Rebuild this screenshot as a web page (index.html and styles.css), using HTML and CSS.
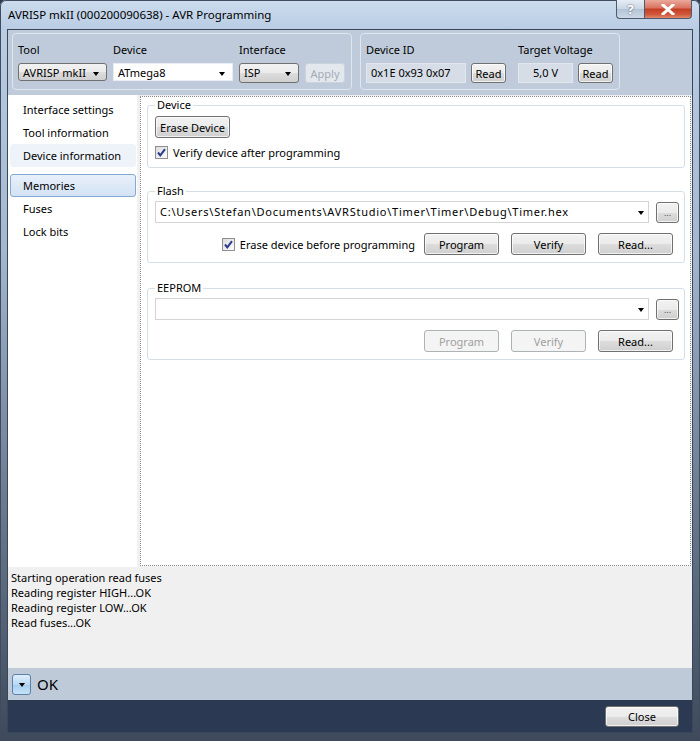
FILE: index.html
```html
<!DOCTYPE html>
<html lang="en">
<head>
    <meta charset="UTF-8">
    <title>AVR Programming</title>
    <link rel="stylesheet" href="styles.css">
</head>
<body>

<div class="window">
    <!-- Title bar -->
    <div class="titlebar">
        <span class="title">AVRISP mkII (000200090638) - AVR Programming</span>
        <div class="caption-buttons">
            <span class="cap-btn help-btn">?</span>
            <span class="cap-btn close-btn">
                <svg width="14" height="11" viewBox="0 0 14 11"><path d="M2 1 L12 10 M12 1 L2 10" stroke="#fff" stroke-width="3" stroke-linecap="square"/></svg>
            </span>
        </div>
    </div>

    <div class="client">
        <!-- Tool / device selection -->
        <div class="toolbar">
            <div class="tgroup">
                <div class="tfield">
                    <span class="tlabel">Tool</span>
                    <div class="combo btn-combo tool-combo">AVRISP mkII<span class="caret"></span></div>
                </div>
                <div class="tfield">
                    <span class="tlabel">Device</span>
                    <div class="combo white-combo device-combo">ATmega8<span class="caret"></span></div>
                </div>
                <div class="tfield">
                    <span class="tlabel">Interface</span>
                    <div class="tfield-row">
                        <div class="combo btn-combo iface-combo">ISP<span class="caret"></span></div>
                        <button class="btn apply-btn" disabled>Apply</button>
                    </div>
                </div>
            </div>

            <div class="tgroup">
                <div class="tfield">
                    <span class="tlabel">Device ID</span>
                    <div class="tfield-row">
                        <div class="readout id-readout">0x1E 0x93 0x07</div>
                        <button class="btn small-btn">Read</button>
                    </div>
                </div>
                <div class="tfield voltage-field">
                    <span class="tlabel">Target Voltage</span>
                    <div class="tfield-row">
                        <div class="readout volt-readout">5,0 V</div>
                        <button class="btn small-btn">Read</button>
                    </div>
                </div>
            </div>
        </div>

        <div class="main-area">
            <!-- Page list -->
            <ul class="sidebar">
                <li>Interface settings</li>
                <li>Tool information</li>
                <li class="hover">Device information</li>
                <li class="selected gap">Memories</li>
                <li>Fuses</li>
                <li>Lock bits</li>
            </ul>

            <div class="page">
                <fieldset class="group">
                    <legend>Device</legend>
                    <button class="btn erase-btn">Erase Device</button>
                    <label class="check-row">
                        <span class="checkbox"><svg width="13" height="13" viewBox="0 0 13 13"><path d="M3 6.5 L5.3 9.3 L10 3.2" stroke="#2a3a8c" stroke-width="2" fill="none"/></svg></span>
                        Verify device after programming
                    </label>
                </fieldset>

                <fieldset class="group">
                    <legend>Flash</legend>
                    <div class="file-row">
                        <div class="combo file-combo"><span class="path">C:\Users\Stefan\Documents\AVRStudio\Timer\Timer\Debug\Timer.hex</span><span class="caret"></span></div>
                        <button class="btn browse-btn">...</button>
                    </div>
                    <div class="action-row">
                        <label class="check-row">
                            <span class="checkbox"><svg width="13" height="13" viewBox="0 0 13 13"><path d="M3 6.5 L5.3 9.3 L10 3.2" stroke="#2a3a8c" stroke-width="2" fill="none"/></svg></span>
                            Erase device before programming
                        </label>
                        <button class="btn action-btn">Program</button>
                        <button class="btn action-btn">Verify</button>
                        <button class="btn action-btn">Read...</button>
                    </div>
                </fieldset>

                <fieldset class="group">
                    <legend>EEPROM</legend>
                    <div class="file-row">
                        <div class="combo file-combo"><span class="caret"></span></div>
                        <button class="btn browse-btn">...</button>
                    </div>
                    <div class="action-row">
                        <button class="btn action-btn" disabled>Program</button>
                        <button class="btn action-btn" disabled>Verify</button>
                        <button class="btn action-btn">Read...</button>
                    </div>
                </fieldset>
            </div>
        </div>

        <!-- Output log -->
        <div class="log">
            <div>Starting operation read fuses</div>
            <div>Reading register HIGH...OK</div>
            <div>Reading register LOW...OK</div>
            <div>Read fuses...OK</div>
        </div>

        <div class="status">
            <span class="expand-btn"><span class="caret"></span></span>
            <span class="status-text">OK</span>
        </div>

        <div class="footer">
            <button class="btn close-dlg">Close</button>
        </div>
    </div>
</div>

</body>
</html>
```

FILE: styles.css
```css
body {
    margin: 0;
    font-family: "Noto Sans", sans-serif;
    font-size: 11px;
    color: #000;
    background: #2b3953;
}

.window {
    width: 700px;
    height: 741px;
    box-sizing: border-box;
    display: flex;
    flex-direction: column;
    padding: 0 8px 9px 8px;
    background: linear-gradient(to bottom, #cddcee 0px, #b8cce3 30px, #a3b7cf 250px, #6b7a8f 500px, #3e4a5b 741px);
    box-shadow: inset 0 0 0 1px #3f4c5f;
    border-radius: 6px 6px 0 0;
}

/* Title bar */
.titlebar {
    height: 30px;
    display: flex;
    align-items: flex-start;
    flex-shrink: 0;
}

.title {
    line-height: 30px;
    font-size: 11.5px;
    color: #000;
}

.caption-buttons {
    margin-left: auto;
    display: flex;
}

.cap-btn {
    height: 18px;
    display: flex;
    align-items: center;
    justify-content: center;
    border: 1px solid #4d5b70;
    border-top: none;
}

.help-btn {
    width: 27px;
    border-right: none;
    border-radius: 0 0 0 4px;
    background: linear-gradient(to bottom, #e6edf5, #c9d6e4 50%, #b3c3d6 51%, #cbd8e6);
    color: #fff;
    font-weight: bold;
    font-size: 13px;
    text-shadow: 0 0 2px #445;
}

.close-btn {
    width: 46px;
    border-radius: 0 0 4px 0;
    background: linear-gradient(to bottom, #e9a99c, #d9715d 45%, #c33d22 50%, #d0583b 80%, #e2896d);
}

/* Client */
.client {
    flex: 1;
    display: flex;
    flex-direction: column;
    box-shadow: 0 0 0 1px #3a475a;
    background: #f0f0f0;
}

.toolbar {
    height: 65px;
    flex-shrink: 0;
    box-sizing: border-box;
    background: #bfcbda;
    padding: 3px 4px 0 4px;
    display: flex;
    gap: 8px;
    align-items: flex-start;
}

.tgroup {
    display: flex;
    gap: 6px;
    border: 1px solid #e0e6ee;
    border-radius: 4px;
    padding: 8px 6px 8px 5px;
    height: 39px;
}

.tfield {
    display: flex;
    flex-direction: column;
}

.voltage-field {
    margin-left: 6px;
}

.tlabel {
    line-height: 15px;
    margin-bottom: 6px;
}

.tfield-row {
    display: flex;
    gap: 6px;
}

.combo {
    position: relative;
    box-sizing: border-box;
    height: 20px;
    line-height: 18px;
    padding-left: 4px;
    white-space: nowrap;
    overflow: hidden;
}

.caret {
    position: absolute;
    right: 7px;
    top: 8px;
    border-left: 3.5px solid transparent;
    border-right: 3.5px solid transparent;
    border-top: 4px solid #000;
}

.btn-combo {
    border: 1px solid #707070;
    border-radius: 3px;
    background: linear-gradient(to bottom, #f2f2f2, #ebebeb 50%, #dddddd 51%, #cfcfcf);
}

.tool-combo {
    width: 89px;
}

.white-combo {
    background: #fff;
    border: 1px solid #e8edf3;
}

.device-combo {
    width: 120px;
}

.iface-combo {
    width: 60px;
}

.btn {
    font-family: inherit;
    font-size: 11px;
    color: #000;
    border: 1px solid #707070;
    border-radius: 3px;
    background: linear-gradient(to bottom, #f2f2f2, #ebebeb 50%, #dddddd 51%, #cfcfcf);
    padding: 0;
    height: 22px;
    box-shadow: inset 0 0 0 1px rgba(255, 255, 255, 0.7);
}

.btn:disabled {
    color: #a0a0a0;
    border-color: #adb2b5;
    background: #f4f4f4;
    box-shadow: none;
}

.apply-btn {
    width: 40px;
    height: 20px;
}

.apply-btn:disabled {
    background: #e3e8ee;
    border-color: #cbd3dc;
    color: #a3abb5;
}

.readout {
    box-sizing: border-box;
    height: 20px;
    line-height: 18px;
    background: #d6dde6;
    border: 1px solid #e2e7ee;
}

.id-readout {
    width: 100px;
    padding-left: 4px;
}

.volt-readout {
    width: 55px;
    text-align: center;
}

.small-btn {
    width: 35px;
    height: 20px;
    margin-left: -1px;
}

/* Main area */
.main-area {
    flex: 1;
    display: flex;
    background: #f0f0f0;
    padding: 1px 1px 1px 0;
}

.sidebar {
    list-style: none;
    margin: -1px 3px -1px 0;
    padding: 3px 1px 0 2px;
    width: 126px;
    background: #fff;
}

.sidebar li {
    box-sizing: border-box;
    height: 23px;
    line-height: 21px;
    padding-left: 12px;
    border: 1px solid transparent;
    border-radius: 3px;
}

.sidebar li.gap {
    margin-top: 7px;
}

.sidebar li.hover {
    background: #eef3fa;
    border-color: #eef3fa;
}

.sidebar li.selected {
    background: linear-gradient(to bottom, #e8f0fa, #d3e2f4);
    border-color: #86a9d4;
}

.page {
    flex: 1;
    background: #fff;
    border: 1px dotted #8a8a8a;
    padding: 1px 5px 0 6px;
}

.group {
    margin: 0 0 16px 0;
    padding: 3px 5px 7px 7px;
    border: 1px solid #d5dfe5;
    border-radius: 3px;
}

.group + .group + .group {
    margin-top: 18px;
}

.group legend {
    padding: 0 2px;
    margin-left: 0;
    line-height: 14px;
}

.erase-btn {
    width: 75px;
    margin-top: 1px;
    display: block;
}

.check-row {
    display: flex;
    align-items: center;
    gap: 5px;
    line-height: 15px;
    margin-top: 7px;
}

.checkbox {
    width: 13px;
    height: 13px;
    box-sizing: border-box;
    border: 1px solid #8e8f8f;
    background: linear-gradient(135deg, #dcdcdc, #fcfcfc);
    display: inline-flex;
    align-items: center;
    justify-content: center;
}

.checkbox svg {
    flex-shrink: 0;
}

.file-row {
    display: flex;
    gap: 7px;
    align-items: center;
}

.file-combo {
    flex: 1;
    height: 22px;
    line-height: 20px;
    border: 1px solid #d4d4d4;
    background: #fff;
    padding-left: 4px;
}

.path {
    letter-spacing: 0.75px;
}

.file-combo .caret {
    right: 4px;
    top: 9px;
}

.browse-btn {
    width: 23px;
    height: 21px;
    font-size: 9px;
    color: #555;
}

.action-row {
    display: flex;
    justify-content: flex-end;
    align-items: center;
    gap: 12px;
    margin: 10px 6px 0 0;
}

.action-row .check-row {
    margin: 0 -3px 0 0;
}

.action-btn {
    width: 75px;
}

/* Log */
.log {
    height: 101px;
    flex-shrink: 0;
    box-sizing: border-box;
    padding: 3px 3px;
    background: #f0f0f0;
    line-height: 15px;
}

.status {
    height: 32px;
    flex-shrink: 0;
    background: #bfcad9;
    display: flex;
    align-items: center;
    padding-left: 4px;
    gap: 6px;
}

.expand-btn {
    position: relative;
    width: 19px;
    height: 21px;
    box-sizing: border-box;
    border: 1px solid #5c80aa;
    border-radius: 3px;
    background: linear-gradient(to bottom, #e0eefb, #b9d8f3 50%, #a5cdef 51%, #c6e2f8);
}

.expand-btn .caret {
    right: 5px;
    top: 8px;
}

.status-text {
    font-size: 15px;
}

.footer {
    height: 32px;
    flex-shrink: 0;
    background: #2b3953;
    display: flex;
    align-items: center;
    justify-content: flex-end;
    padding-right: 13px;
}

.close-dlg {
    width: 74px;
    height: 21px;
}
```
